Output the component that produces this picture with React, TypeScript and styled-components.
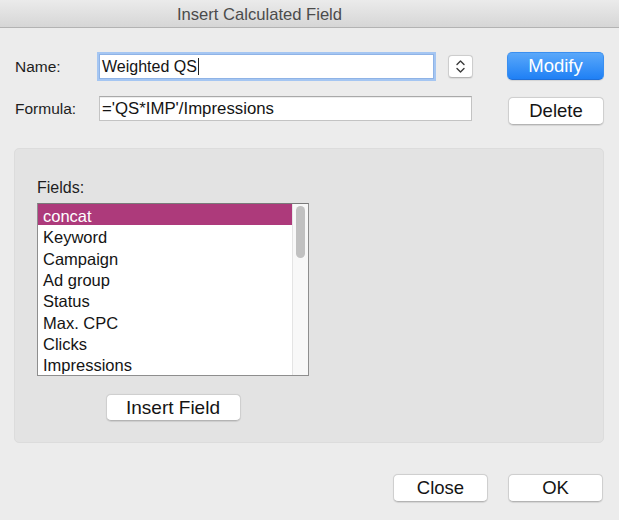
import React from 'react';
import styled, { createGlobalStyle } from 'styled-components';

const GlobalStyle = createGlobalStyle`
	html, body {
		margin: 0;
		padding: 0;
		background: #ececec;
	}
	body {
		font-family: 'Liberation Sans', Arial, sans-serif;
		color: #1b1b1b;
	}
`;

const fields = [
	'concat',
	'Keyword',
	'Campaign',
	'Ad group',
	'Status',
	'Max. CPC',
	'Clicks',
	'Impressions',
];

const StepperIcon = () => (
	<svg width='11' height='15' viewBox='0 0 11 15' fill='none'>
		<path
			d='M2 5.5 L5.5 2 L9 5.5'
			stroke='#3a3a3a'
			strokeWidth='1.4'
			strokeLinecap='round'
			strokeLinejoin='round'
		/>
		<path
			d='M2 9.5 L5.5 13 L9 9.5'
			stroke='#3a3a3a'
			strokeWidth='1.4'
			strokeLinecap='round'
			strokeLinejoin='round'
		/>
	</svg>
);

const App = () => {
	return (
		<>
			<GlobalStyle />
			<Window>
				<TitleBar>
					<Title>Insert Calculated Field</Title>
				</TitleBar>

				<FormArea>
					<Row>
						<Label>Name:</Label>
						<TextField width={335} focused>
							Weighted QS
							<Caret />
						</TextField>
						<Stepper>
							<StepperIcon />
						</Stepper>
						<Button primary width={97} style={{ marginLeft: 34 }}>
							Modify
						</Button>
					</Row>
					<Row second>
						<Label>Formula:</Label>
						<TextField width={373} size={16.8}>
							='QS*IMP'/Impressions
						</TextField>
						<Button width={96} style={{ marginLeft: 36, marginTop: 1 }}>
							Delete
						</Button>
					</Row>
				</FormArea>

				<Group>
					<FieldsLabel>Fields:</FieldsLabel>
					<ListBox>
						<ListRows>
							{fields.map((f, i) => (
								<ListRow key={f} selected={i === 0}>
									{f}
								</ListRow>
							))}
						</ListRows>
						<ScrollTrack>
							<ScrollThumb />
						</ScrollTrack>
					</ListBox>
					<InsertWrap>
						<Button width={135} height={27} size={19}>
							Insert Field
						</Button>
					</InsertWrap>
				</Group>

				<Footer>
					<Button width={95}>Close</Button>
					<Button width={95}>OK</Button>
				</Footer>
			</Window>
		</>
	);
};

export default App;

const Window = styled.div`
	width: 619px;
	height: 520px;
	background: #ececec;
	overflow: hidden;
`;

const TitleBar = styled.div`
	height: 27px;
	background: linear-gradient(#ebebeb, #d6d6d6);
	border-bottom: 1px solid #b3b3b3;
	display: flex;
	align-items: center;
	justify-content: center;
	padding-right: 100px;
`;

const Title = styled.div`
	font-size: 16.6px;
	color: #4b4b4b;
	margin-top: 2px;
`;

const FormArea = styled.div`
	padding: 24px 0 0 15px;
`;

const Row = styled.div<{ second?: boolean }>`
	display: flex;
	align-items: ${(p) => (p.second ? 'flex-start' : 'center')};
	height: ${(p) => (p.second ? 29 : 28)}px;
	margin-top: ${(p) => (p.second ? 16 : 0)}px;
`;

const Label = styled.div`
	width: 84px;
	font-size: 15.5px;
	line-height: 25px;
	color: #1e1e1e;
`;

const TextField = styled.div<{ width: number; focused?: boolean; size?: number }>`
	box-sizing: border-box;
	width: ${(p) => p.width}px;
	height: 25px;
	background: #fff;
	border: 1px solid ${(p) => (p.focused ? '#8fb3e6' : '#c3c3c3')};
	border-top-color: ${(p) => (p.focused ? '#8fb3e6' : '#a9a9a9')};
	box-shadow: ${(p) =>
		p.focused ? '0 0 0 2px #a5c6f2' : 'inset 0 1px 0 #ededed'};
	padding-left: 2px;
	font-size: ${(p) => p.size ?? 16}px;
	line-height: 23px;
	color: #141414;
	display: flex;
	align-items: center;
	white-space: nowrap;
`;

const Caret = styled.span`
	display: inline-block;
	width: 1px;
	height: 17px;
	background: #222;
	margin-left: 1px;
`;

const Stepper = styled.div`
	box-sizing: border-box;
	width: 25px;
	height: 23px;
	margin-left: 14px;
	background: #fff;
	border: 1px solid #cdcdcd;
	border-bottom-color: #b5b5b5;
	border-radius: 4px;
	box-shadow: 0 0.5px 1px rgba(0, 0, 0, 0.08);
	display: flex;
	align-items: center;
	justify-content: center;
`;

const Button = styled.div<{
	primary?: boolean;
	width: number;
	height?: number;
	size?: number;
}>`
	box-sizing: border-box;
	width: ${(p) => p.width}px;
	height: ${(p) => p.height ?? 28}px;
	border-radius: 5px;
	display: flex;
	align-items: center;
	justify-content: center;
	font-size: ${(p) => p.size ?? 18.5}px;
	flex-shrink: 0;
	color: ${(p) => (p.primary ? '#fff' : '#141414')};
	background: ${(p) =>
		p.primary ? 'linear-gradient(#5aa8fa, #1f80f5)' : '#ffffff'};
	border: 1px solid ${(p) => (p.primary ? '#3a8ff0' : '#cfcfcf')};
	border-bottom-color: ${(p) => (p.primary ? '#1f6fd8' : '#b4b4b4')};
	box-shadow: 0 0.5px 1px rgba(0, 0, 0, 0.1);
`;

const Group = styled.div`
	box-sizing: border-box;
	margin: 23px 15px 0 14px;
	height: 295px;
	background: #e3e3e3;
	border: 1px solid #dcdcdc;
	border-radius: 5px;
	padding: 30px 0 0 22px;
`;

const FieldsLabel = styled.div`
	font-size: 16px;
	line-height: 18px;
	color: #1e1e1e;
	margin-bottom: 6px;
`;

const ListBox = styled.div`
	box-sizing: border-box;
	width: 272px;
	height: 173px;
	background: #fff;
	border: 1px solid #8e8e8e;
	border-top-color: #7a7a7a;
	display: flex;
	overflow: hidden;
`;

const ListRows = styled.div`
	flex: 1;
	display: flex;
	flex-direction: column;
`;

const ListRow = styled.div<{ selected?: boolean }>`
	box-sizing: border-box;
	height: 21.33px;
	padding: 3px 0 0 5px;
	line-height: 18.33px;
	font-size: 16.5px;
	color: ${(p) => (p.selected ? '#fff' : '#141414')};
	background: ${(p) => (p.selected ? '#ad3a7b' : 'transparent')};
	white-space: nowrap;
`;

const ScrollTrack = styled.div`
	width: 15px;
	background: #f8f8f8;
	border-left: 1px solid #e4e4e4;
	display: flex;
	justify-content: center;
	padding-top: 2px;
`;

const ScrollThumb = styled.div`
	width: 9px;
	height: 52px;
	border-radius: 5px;
	background: #c1c1c1;
`;

const InsertWrap = styled.div`
	width: 272px;
	display: flex;
	justify-content: center;
	margin-top: 18px;
`;

const Footer = styled.div`
	display: flex;
	justify-content: flex-end;
	gap: 20px;
	padding-right: 16px;
	margin-top: 31px;
`;
